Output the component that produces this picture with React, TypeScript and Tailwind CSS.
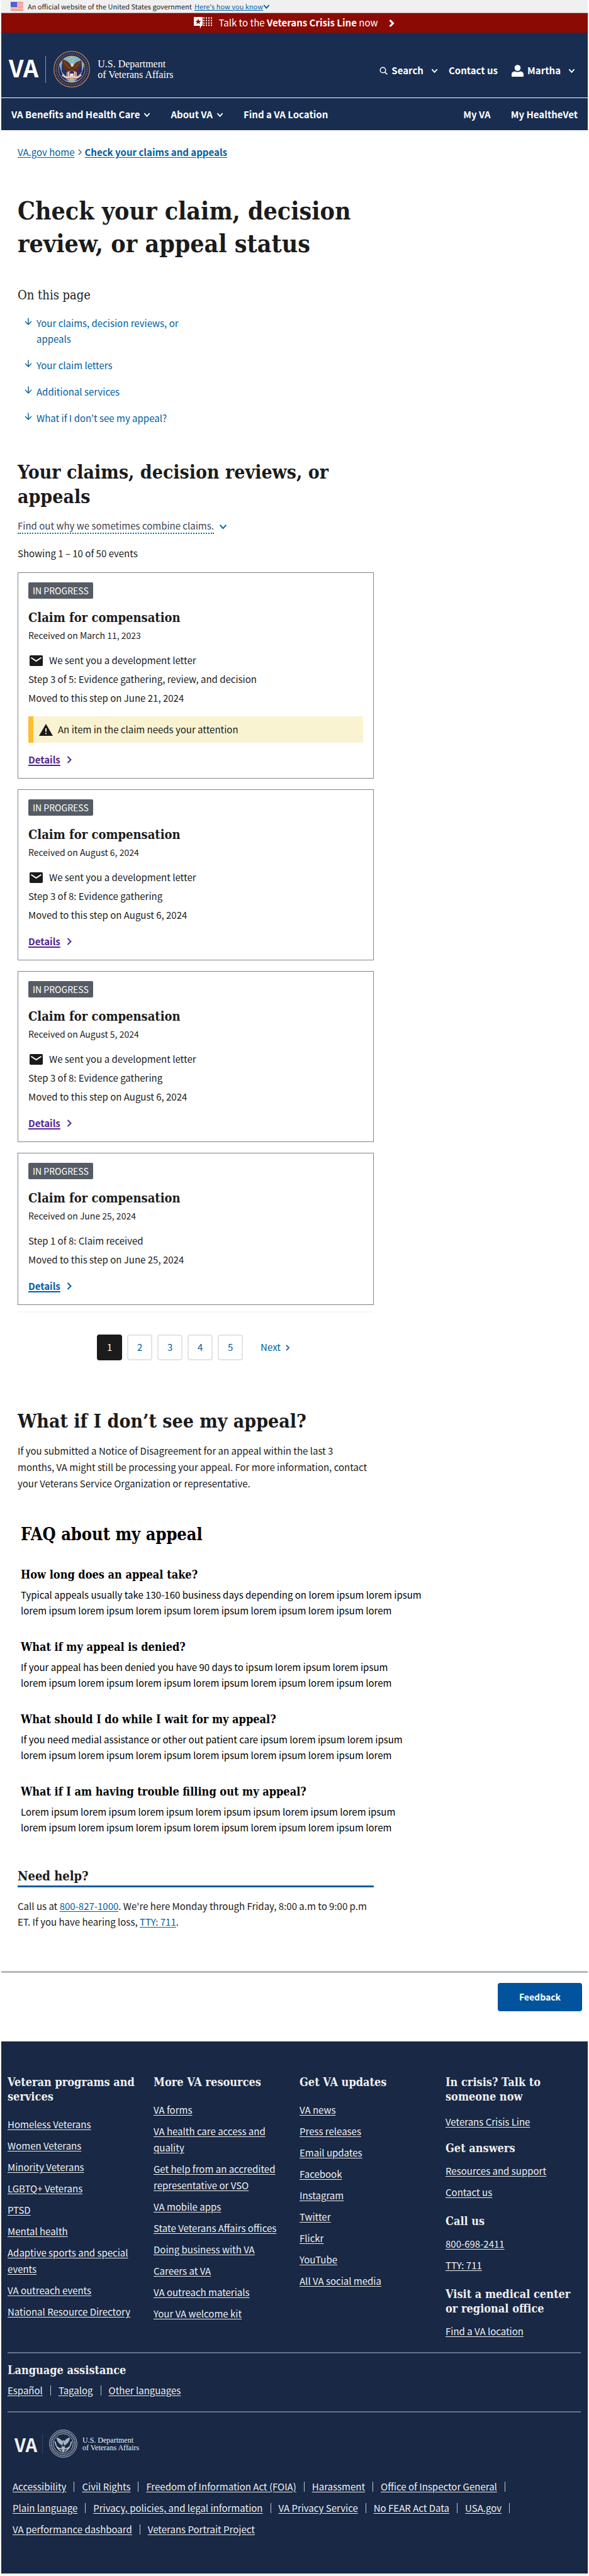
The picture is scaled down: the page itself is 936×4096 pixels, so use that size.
import type { ReactNode } from "react";

const SERIF = "font-['DejaVu_Serif_Condensed','DejaVu_Serif',serif]";

function Chevron({ dir, className }: { dir: "down" | "right"; className: string }) {
  return (
    <svg viewBox="0 0 12 12" className={className} fill="none" stroke="currentColor" aria-hidden="true">
      <path d={dir === "down" ? "M1.5 3.5 6 8.5l4.5-5" : "M3.5 1 8.5 6l-5 5"} />
    </svg>
  );
}

function Flag() {
  return (
    <svg viewBox="0 0 20 14" className="h-[14px] w-5 shrink-0" aria-hidden="true">
      <rect width="20" height="14" fill="#fff" />
      {[0, 2.2, 4.4, 6.6, 8.8, 11, 13].map((y) => (
        <rect key={y} y={y} width="20" height="1.1" fill="#e8604c" />
      ))}
      <rect width="10" height="8" fill="#3c50c8" />
      {[1.2, 3.2, 5.2].map((y) =>
        [1.5, 3.7, 5.9, 8].map((x) => <rect key={`${x}-${y}`} x={x} y={y} width="0.9" height="0.9" fill="#b9c3f5" />),
      )}
    </svg>
  );
}

function CrisisIcon() {
  return (
    <svg viewBox="0 0 29 19" className="h-[19px] w-[29px] shrink-0" fill="#fff" aria-hidden="true">
      <path d="M0 0h14v14h-2l-2.2 5V14H0z" />
      <path d="M7 2.6l1.2 3.3 3.5.1-2.8 2.2 1 3.4L7 9.6l-2.9 2 1-3.4L2.3 6l3.5-.1z" fill="#8b0a03" />
      {[1, 5, 9, 12.6].map((y) =>
        [15, 19, 23, 27].map((x) => <rect key={`${x}-${y}`} x={x} y={y - 0.5} width="2" height="2.2" rx="0.6" />),
      )}
    </svg>
  );
}

function Seal() {
  return (
    <svg viewBox="0 0 58 58" className="size-[58px] shrink-0" aria-label="Department of Veterans Affairs seal">
      <circle cx="29" cy="29" r="28.3" fill="#1c2250" stroke="#b08d57" strokeWidth="1.3" />
      <circle cx="29" cy="29" r="24.6" fill="none" stroke="#c8a86a" strokeWidth="3" strokeDasharray="1.3 1.6" opacity="0.55" />
      <circle cx="29" cy="29" r="21" fill="#7fb5d6" stroke="#c8a86a" strokeWidth="1" />
      <path d="M9.5 22c2 12 6 20 15 26-9-1-16.5-9-16.2-20zM48.500 22c-2 12-6 20-15 26 9-1 16.500-9 16.200-20z" fill="#23285c" />
      <path d="M13 20v13l7 8 3-9zM45 20v13l-7 8-3-9z" fill="#2c2f63" />
      <path
        d="M28 23c-4-6-8-8-13.500-9.500C12.500 18 14 25 20 30c1.500 3 3 5 6 6l3 3 4-3c3-2 4-5 5-7 5-3 8-8 6.500-14-5 1-9 2.500-12 7l-1-2c-1.500-1-3-.5-3.500 3z"
        fill="#5f3318"
      />
      <path d="M17 17c3 6 7 9 10 11M42 17c-3 5-6 8-9 10" stroke="#8a5227" strokeWidth="1.3" fill="none" />
      <path d="M27.500 21c1-2.500 4-2.500 4.500 0l-1 4h-3z" fill="#e9dcc3" />
      <path d="M31.500 21.500l2 1-2 .8z" fill="#e4b33c" />
      <path d="M21 34l8-3 8 3v7l-8 5-8-5z" fill="#f2ece6" />
      <path d="M22.500 34v7M25.500 33v10M32.500 33v10M35.500 34v7" stroke="#c63a35" strokeWidth="1.4" />
      <path d="M26 32.500l3-1.500 3 1.500v3.500h-6z" fill="#2a3470" />
      <path d="M14 38c5 6 10 5 15 2 5 3 10 4 15-2" stroke="#e7d9d0" strokeWidth="2.600" fill="none" />
      <path d="M14.500 40c5 5 9 5 14.500 2 5 3 9.500 3 14.500-2" stroke="#b9403a" strokeWidth="1" fill="none" />
      <path d="M27 42h4l-1 8h-2z" fill="#d8b04c" />
      <g fill="#e6d24f">
        <circle cx="29" cy="10.500" r="1" />
        <circle cx="25.500" cy="12" r="0.9" />
        <circle cx="32.500" cy="12" r="0.9" />
        <circle cx="27" cy="15.500" r="0.9" />
        <circle cx="31" cy="15.500" r="0.9" />
      </g>
    </svg>
  );
}

function SealMono() {
  return (
    <svg viewBox="0 0 45 45" className="size-[45px] shrink-0" fill="none" stroke="#b7bfcb" aria-label="Department of Veterans Affairs seal">
      <circle cx="22.500" cy="22.500" r="21.800" strokeWidth="1" />
      <circle cx="22.500" cy="22.500" r="18.800" strokeWidth="2.800" strokeDasharray="1.200 1.200" />
      <circle cx="22.500" cy="22.500" r="15.800" strokeWidth="1" />
      <path d="M12 13c1 6 4 10 9 12l1.500-7 1.500 7c5-2 8-6 9-12-4 1-7 3-9 6l-1.500-2-1.500 2c-2-3-5-5-9-6z" fill="#aab3c1" strokeWidth="0.600" />
      <path d="M9.500 19c1 8 5 13 10 16M35.500 19c-1 8-5 13-10 16M13 28c4 4 7 3 9.500 1 2.500 2 5.500 3 9.500-1" strokeWidth="1.800" />
      <path d="M20 27h5l-1 9h-3z" fill="#aab3c1" strokeWidth="0.500" />
    </svg>
  );
}

function MailIcon() {
  return (
    <svg viewBox="0 0 21 17" className="h-[17px] w-[21px] shrink-0" aria-hidden="true">
      <rect width="21" height="17" rx="1.800" fill="#1b1b1b" />
      <path d="M2.500 3.800l8 5.200 8-5.200" fill="none" stroke="#fff" strokeWidth="1.900" />
    </svg>
  );
}

function WarningIcon() {
  return (
    <svg viewBox="0 0 22 19" className="h-[19px] w-[22px] shrink-0" aria-hidden="true">
      <path d="M11 0l11 19H0z" fill="#1b1b1b" />
      <path d="M11 7v5.500M11 14.300v2" stroke="#faf3d1" strokeWidth="2" />
    </svg>
  );
}

function ArrowDown() {
  return (
    <svg viewBox="0 0 12 12" className="mt-1 size-3 shrink-0" fill="none" stroke="currentColor" strokeWidth="1.400" aria-hidden="true">
      <path d="M6 0.500v10.500M1 6l5 5 5-5" />
    </svg>
  );
}

type Claim = { received: string; letter: boolean; step: string; moved: string; alert?: string; visited: boolean };

const claims: Claim[] = [
  {
    received: "March 11, 2023",
    letter: true,
    step: "Step 3 of 5: Evidence gathering, review, and decision",
    moved: "June 21, 2024",
    alert: "An item in the claim needs your attention",
    visited: true,
  },
  { received: "August 6, 2024", letter: true, step: "Step 3 of 8: Evidence gathering", moved: "August 6, 2024", visited: true },
  { received: "August 5, 2024", letter: true, step: "Step 3 of 8: Evidence gathering", moved: "August 6, 2024", visited: true },
  { received: "June 25, 2024", letter: false, step: "Step 1 of 8: Claim received", moved: "June 25, 2024", visited: false },
];

function ClaimCard({ claim }: { claim: Claim }) {
  return (
    <li className="border border-[#7f8489] px-4 pt-[15px] pb-[17px]">
      <span className="block w-fit rounded-[2px] bg-[#565c65] px-[7px] text-[14px] leading-[26px] text-white">IN PROGRESS</span>
      <h3 className={`mt-[17px] text-[20px] leading-[26px] font-bold ${SERIF}`}>Claim for compensation</h3>
      <p className="mt-1 text-[14px] leading-[22px]">Received on {claim.received}</p>
      <div className="mt-[14px] leading-[30px]">
        {claim.letter && (
          <p className="flex items-center gap-[10px] pl-[2px]">
            <MailIcon />
            We sent you a development letter
          </p>
        )}
        <p>{claim.step}</p>
        <p>Moved to this step on {claim.moved}</p>
      </div>
      {claim.alert && (
        <p className="mt-[14px] flex h-[42px] items-center gap-2 border-l-8 border-[#ffbe2e] bg-[#faf3d1] pl-[9px]">
          <WarningIcon />
          {claim.alert}
        </p>
      )}
      <a
        href="#details"
        className={`mt-[14px] flex w-fit items-center gap-2 leading-[25px] font-bold ${claim.visited ? "text-[#54278f]" : "text-[#005ea2]"}`}
      >
        <span className="underline decoration-2 underline-offset-2">Details</span>
        <Chevron dir="right" className="size-[12px] stroke-2" />
      </a>
    </li>
  );
}

const L = "lorem ipsum lorem ipsum lorem ipsum lorem ipsum lorem ipsum lorem ipsum lorem";

const faqs: [string, string][] = [
  ["How long does an appeal take?", "Typical appeals usually take 130-160 business days depending on lorem ipsum lorem ipsum"],
  ["What if my appeal is denied?", "If your appeal has been denied you have 90 days to ipsum lorem ipsum lorem ipsum"],
  ["What should I do while I wait for my appeal?", "If you need medial assistance or other out patient care ipsum lorem ipsum lorem ipsum"],
  ["What if I am having trouble filling out my appeal?", "Lorem ipsum lorem ipsum lorem ipsum lorem ipsum ipsum lorem ipsum lorem ipsum"],
];

function FooterHeading({ children, className = "" }: { children: ReactNode; className?: string }) {
  return <h2 className={`text-[18px] leading-[23px] font-bold ${SERIF} ${className}`}>{children}</h2>;
}

function FooterLinks({ items, className = "" }: { items: string[]; className?: string }) {
  return (
    <ul className={`flex flex-col gap-2 leading-[26px] ${className}`}>
      {items.map((item) => (
        <li key={item}>
          <a href="#footer" className="underline underline-offset-2">
            {item}
          </a>
        </li>
      ))}
    </ul>
  );
}

function BarList({ items, className }: { items: string[]; className: string }) {
  return (
    <ul className={`flex flex-wrap ${className}`}>
      {items.map((item, i) => (
        <li key={item} className="flex items-center">
          <a href="#footer" className="underline underline-offset-2">
            {item}
          </a>
          {i < items.length - 1 && <span className="mx-3 h-4 w-px bg-[#c3c9d2]" />}
        </li>
      ))}
    </ul>
  );
}

export default function App() {
  return (
    <div className="bg-white px-[2px] pb-[3px] font-['Noto_Sans_CJK_JP','Source_Sans_Pro',sans-serif] text-[15px] text-[#1b1b1b]">
      <div className="flex h-[21px] items-center border-b border-[#b9a9a9] bg-[#f0f0f0] pl-[15px] text-[11px] leading-[20px]">
        <Flag />
        <span className="ml-[7px]">An official website of the United States government</span>
        <button type="button" className="ml-1 flex items-center text-[#005ea2]">
          <span className="underline">Here's how you know</span>
          <Chevron dir="down" className="size-[11px] stroke-2" />
        </button>
      </div>

      <a href="#crisis" className="flex h-[31px] items-center justify-center bg-[#8b0a03] text-white">
        <CrisisIcon />
        <span className="ml-[11px]">
          Talk to the <strong>Veterans Crisis Line</strong> now
        </span>
        <Chevron dir="right" className="ml-4 size-[12px] stroke-3" />
      </a>

      <header className="bg-[#182d50] font-bold text-white">
        <div className="flex h-[104px] items-center justify-between border-b border-white pt-[13px] pr-5 pl-3">
          <a href="#home" className="flex items-center">
            <span className="pb-[6px] text-[38px] leading-[44px]">VA</span>
            <span className="ml-[11px] h-[43px] w-px bg-[#8b96a8]" />
            <span className="ml-3">
              <Seal />
            </span>
            <span className="ml-3 font-['Liberation_Serif',serif] text-[16px] leading-[17px] font-normal">
              U.S. Department
              <br />
              of Veterans Affairs
            </span>
          </a>
          <div className="flex items-center pt-1">
            <button type="button" className="flex items-center">
              <svg viewBox="0 0 13 13" className="mr-[6px] size-[13px]" fill="none" stroke="currentColor" strokeWidth="1.500" aria-hidden="true">
                <circle cx="5.500" cy="5.500" r="4.300" />
                <path d="M8.600 8.600l3.800 3.800" />
              </svg>
              Search
              <Chevron dir="down" className="ml-3 size-[11px] stroke-2" />
            </button>
            <a href="#contact" className="ml-[17px]">
              Contact us
            </a>
            <button type="button" className="ml-[22px] flex items-center">
              <svg viewBox="0 0 19 19" className="mr-[6px] size-[19px]" fill="currentColor" aria-hidden="true">
                <circle cx="9.500" cy="5" r="4.800" />
                <path d="M0 19v-4c0-3 3-4.500 5-4.500 3 1.300 6 1.300 9 0 2 0 5 1.500 5 4.500v4z" />
              </svg>
              Martha
              <Chevron dir="down" className="ml-3 size-[11px] stroke-2" />
            </button>
          </div>
        </div>
        <nav className="flex h-[51px] items-center justify-between px-4 pt-[2px]">
          <div className="flex gap-8">
            <button type="button" className="flex items-center gap-[6px]">
              VA Benefits and Health Care
              <Chevron dir="down" className="size-[11px] stroke-2" />
            </button>
            <button type="button" className="flex items-center gap-[6px]">
              About VA
              <Chevron dir="down" className="size-[11px] stroke-2" />
            </button>
            <a href="#locations">Find a VA Location</a>
          </div>
          <div className="flex gap-8">
            <a href="#my-va">My VA</a>
            <a href="#my-healthevet">My HealtheVet</a>
          </div>
        </nav>
      </header>

      <main className="pt-[22px]">
        <div className="max-w-[592px] pl-[26px]">
          <nav aria-label="Breadcrumb" className="flex items-center leading-[26px] text-[#005ea2]">
            <a href="#home" className="underline underline-offset-2">
              VA.gov home
            </a>
            <Chevron dir="right" className="mx-[3px] size-[10px] stroke-2 text-[#71767a]" />
            <a href="#claims" className="font-bold underline underline-offset-2">
              Check your claims and appeals
            </a>
          </nav>
          <h1 className={`mt-[54px] text-[39px] leading-[52px] font-bold ${SERIF}`}>
            Check your claim, decision
            <br />
            review, or appeal status
          </h1>

          <h2 className={`mt-[43px] text-[20px] leading-[26px] ${SERIF}`}>On this page</h2>
          <ul className="mt-[19px] flex max-w-[280px] flex-col gap-[17px] pl-[11px] leading-[25px] text-[#005ea2]">
            {["Your claims, decision reviews, or appeals", "Your claim letters", "Additional services", "What if I don’t see my appeal?"].map(
              (t) => (
                <li key={t}>
                  <a href="#section" className="flex gap-[7px]">
                    <ArrowDown />
                    <span>{t}</span>
                  </a>
                </li>
              ),
            )}
          </ul>

          <h2 className={`mt-[54px] text-[30px] leading-[39px] font-bold ${SERIF}`}>Your claims, decision reviews, or appeals</h2>
          <button type="button" className="mt-4 flex items-center gap-2 text-[#3d4551]">
            <span className="border-b-2 border-dotted border-[#0076a8] leading-[22px]">Find out why we sometimes combine claims.</span>
            <Chevron dir="down" className="size-[13px] stroke-2 text-[#0076a8]" />
          </button>
          <p className="mt-[18px] leading-[25px]">Showing 1 – 10 of 50 events</p>

          <ul className="mt-[18px] flex flex-col gap-[17px]">
            {claims.map((c, i) => (
              <ClaimCard key={i} claim={c} />
            ))}
          </ul>

          <nav aria-label="Pagination" className="mt-[10px] flex justify-center border-t-2 border-[#f7f7f7] pt-[35px] pr-[6px]">
            <ul className="flex gap-2">
              {[1, 2, 3, 4, 5].map((n) => (
                <li key={n}>
                  <button
                    type="button"
                    className={`h-[41px] w-10 rounded-[4px] border-2 ${
                      n === 1 ? "border-[#1b1b1b] bg-[#1b1b1b] text-white" : "border-[#e3e4e5] text-[#005ea2]"
                    }`}
                  >
                    {n}
                  </button>
                </li>
              ))}
            </ul>
            <a href="#next" className="ml-7 flex items-center gap-[6px] text-[#005ea2]">
              Next
              <Chevron dir="right" className="size-[10px] stroke-2" />
            </a>
          </nav>
        </div>

        <section className="mt-[77px] pl-[26px]">
          <h2 className={`text-[30px] leading-[39px] font-bold ${SERIF}`}>What if I don’t see my appeal?</h2>
          <p className="mt-[15px] max-w-[568px] leading-[26px]">
            If you submitted a Notice of Disagreement for an appeal within the last 3<br />
            months, VA might still be processing your appeal. For more information, contact your Veterans Service Organization or representative.
          </p>
        </section>

        <section className="mt-[50px] pl-[31px] text-black">
          <h2 className={`text-[27px] leading-[36px] font-bold ${SERIF}`}>FAQ about my appeal</h2>
          <div className="mt-[34px] flex flex-col gap-[34px]">
            {faqs.map(([q, a]) => (
              <div key={q}>
                <h3 className={`text-[18px] leading-[24px] font-bold ${SERIF}`}>{q}</h3>
                <p className="mt-[7px] leading-[25px]">
                  {a}
                  <br />
                  {L}
                </p>
              </div>
            ))}
          </div>
        </section>

        <section className="mt-[52px] max-w-[592px] pl-[26px]">
          <h2 className={`border-b-[3px] border-[#005ea2] pb-[2px] text-[20px] leading-[26px] font-bold ${SERIF}`}>Need help?</h2>
          <p className="mt-[17px] leading-[25px]">
            Call us at{" "}
            <a href="tel:8008271000" className="text-[#005ea2] underline underline-offset-2">
              800-827-1000
            </a>
            . We're here Monday through Friday, 8:00 a.m to 9:00 p.m
            <br />
            ET. If you have hearing loss,{" "}
            <a href="tel:711" className="text-[#005ea2] underline underline-offset-2">
              TTY: 711
            </a>
            .
          </p>
        </section>

        <div className="mt-[66px] flex justify-end border-t-[3px] border-[#b4b9bd] pt-4 pr-[9px] pb-12">
          <button type="button" className="h-[45px] w-[134px] rounded-[4px] bg-[#00539c] text-[14px] font-bold text-white">
            Feedback
          </button>
        </div>
      </main>

      <footer className="bg-[#182845] px-[10px] pt-[53px] pb-[53px] text-[#f0f0f0]">
        <div className="grid grid-cols-4 gap-x-4 pb-5">
          <div>
            <FooterHeading>Veteran programs and services</FooterHeading>
            <FooterLinks
              className="mt-5"
              items={[
                "Homeless Veterans",
                "Women Veterans",
                "Minority Veterans",
                "LGBTQ+ Veterans",
                "PTSD",
                "Mental health",
                "Adaptive sports and special events",
                "VA outreach events",
                "National Resource Directory",
              ]}
            />
          </div>
          <div>
            <FooterHeading>More VA resources</FooterHeading>
            <FooterLinks
              className="mt-5"
              items={[
                "VA forms",
                "VA health care access and quality",
                "Get help from an accredited representative or VSO",
                "VA mobile apps",
                "State Veterans Affairs offices",
                "Doing business with VA",
                "Careers at VA",
                "VA outreach materials",
                "Your VA welcome kit",
              ]}
            />
          </div>
          <div>
            <FooterHeading>Get VA updates</FooterHeading>
            <FooterLinks
              className="mt-5"
              items={["VA news", "Press releases", "Email updates", "Facebook", "Instagram", "Twitter", "Flickr", "YouTube", "All VA social media"]}
            />
          </div>
          <div>
            <FooterHeading>In crisis? Talk to someone now</FooterHeading>
            <FooterLinks className="mt-4" items={["Veterans Crisis Line"]} />
            <FooterHeading className="mt-[17px]">Get answers</FooterHeading>
            <FooterLinks className="mt-3" items={["Resources and support", "Contact us"]} />
            <FooterHeading className="mt-[21px]">Call us</FooterHeading>
            <FooterLinks className="mt-3" items={["800-698-2411", "TTY: 711"]} />
            <FooterHeading className="mt-[21px]">Visit a medical center or regional office</FooterHeading>
            <FooterLinks className="mt-3" items={["Find a VA location"]} />
          </div>
        </div>

        <div className="mr-[1px] border-y-2 border-[#66758d] pt-[15px] pb-5">
          <h2 className={`text-[18px] leading-[24px] font-bold ${SERIF}`}>Language assistance</h2>
          <BarList className="mt-[7px] leading-[26px]" items={["Español", "Tagalog", "Other languages"]} />
        </div>

        <div className="flex items-center pt-[27px] pl-[11px]">
          <span className="text-[29px] leading-[34px] font-bold">VA</span>
          <span className="ml-2 h-8 w-px bg-[#33435f]" />
          <span className="ml-[10px]">
            <SealMono />
          </span>
          <span className="ml-2 font-['Liberation_Serif',serif] text-[12px] leading-[12px]">
            U.S. Department
            <br />
            of Veterans Affairs
          </span>
        </div>

        <BarList
          className="mt-[29px] max-w-[860px] pl-2 leading-[34px]"
          items={[
            "Accessibility",
            "Civil Rights",
            "Freedom of Information Act (FOIA)",
            "Harassment",
            "Office of Inspector General",
            "Plain language",
            "Privacy, policies, and legal information",
            "VA Privacy Service",
            "No FEAR Act Data",
            "USA.gov",
            "VA performance dashboard",
            "Veterans Portrait Project",
          ]}
        />
      </footer>
    </div>
  );
}
